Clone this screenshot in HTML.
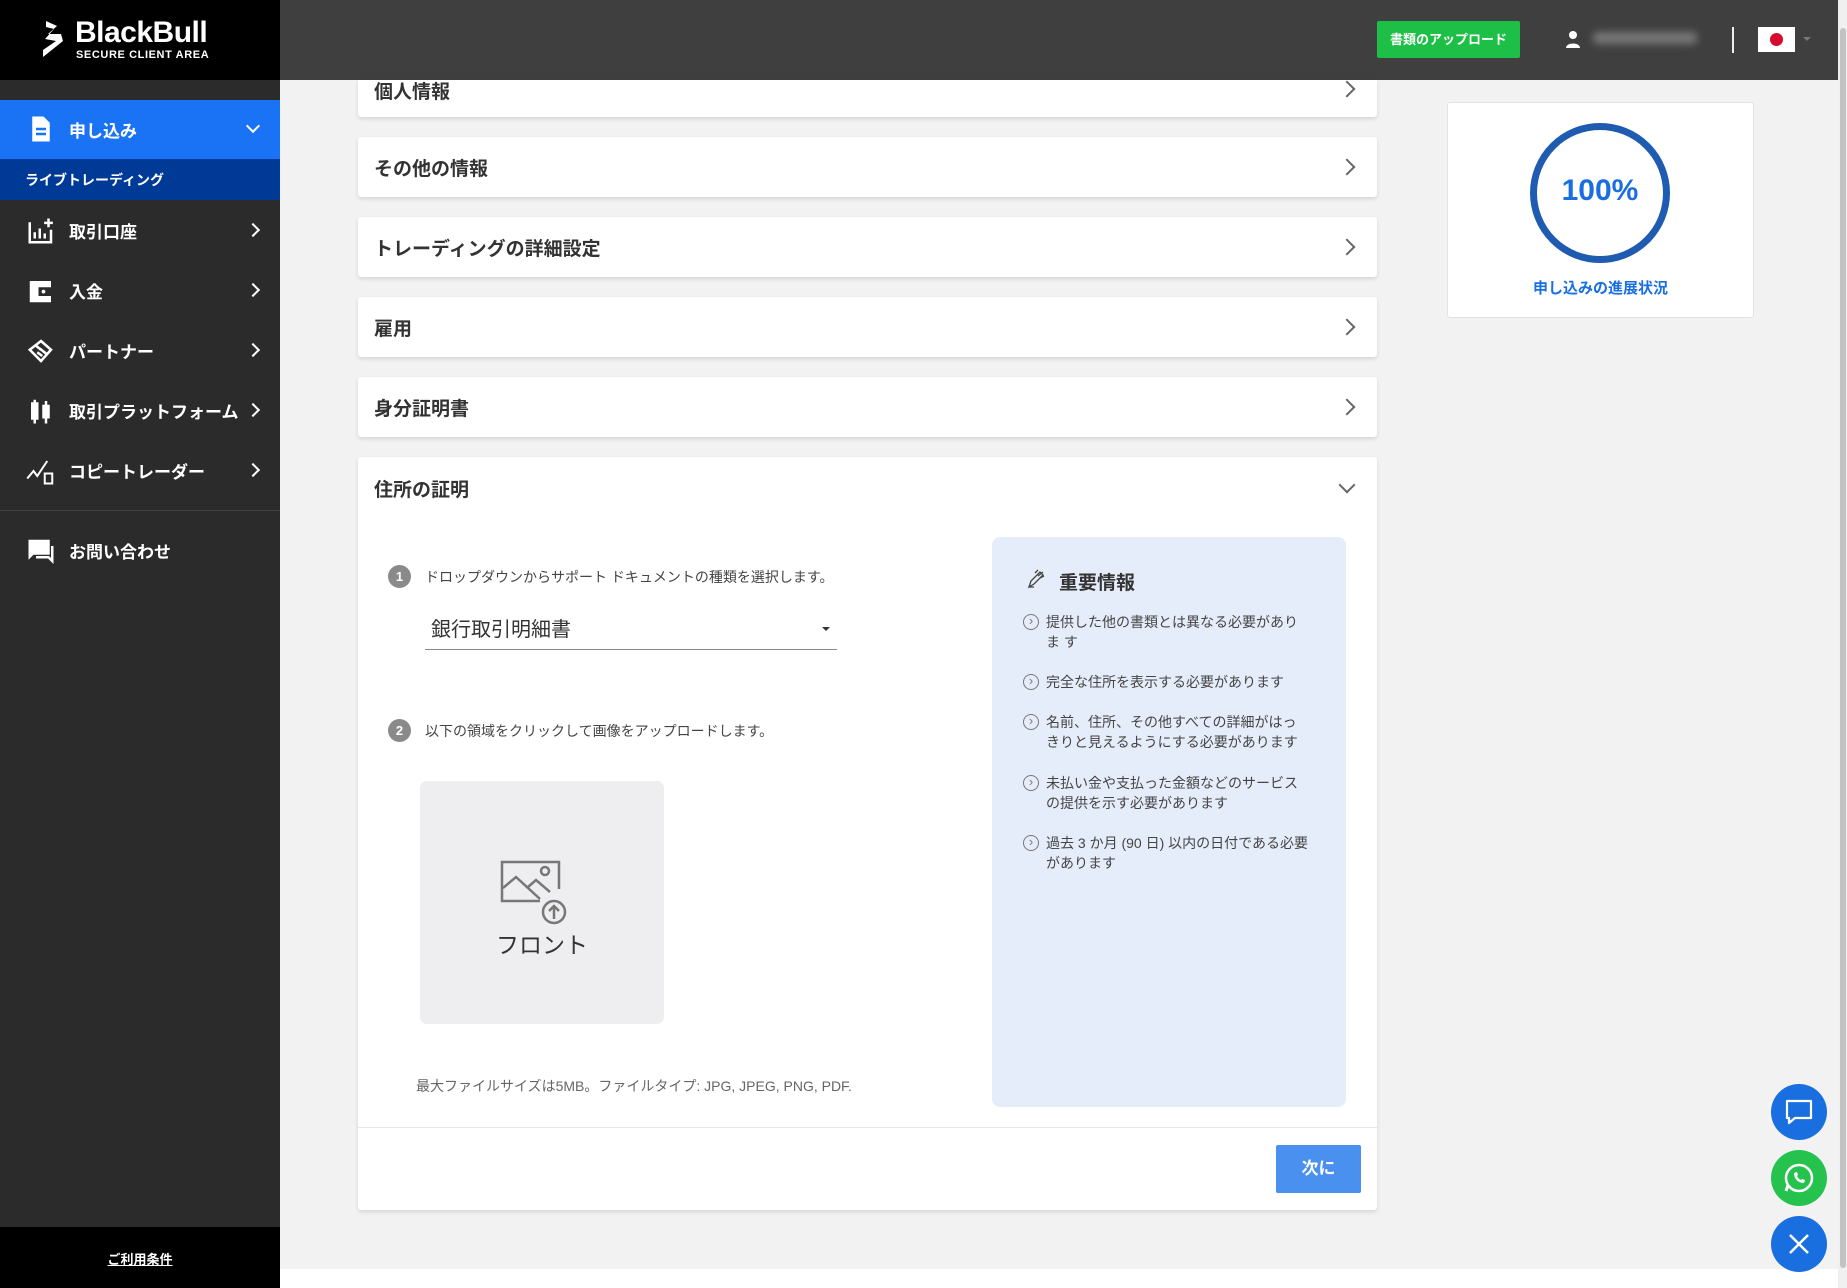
<!DOCTYPE html>
<html><head><meta charset="utf-8"><style>
*{margin:0;padding:0;box-sizing:border-box}
body{width:1847px;height:1288px;overflow:hidden;background:#f2f2f2;font-family:"Liberation Sans","Noto Sans CJK JP",sans-serif;position:relative}
.a{position:absolute}
.side{left:0;top:0;width:280px;height:1288px;background:#2b2b2b}
.mi{position:absolute;left:0;width:280px;height:60px;color:#fff;font-weight:bold;font-size:17px;display:flex;align-items:center}
.mi .ic{position:absolute;left:26px;top:16px;width:30px;height:30px}
.mi .t{position:absolute;left:69px}
.mi .ch{position:absolute;right:22px;top:25px;width:10px;height:10px;border-right:2px solid #fff;border-top:2px solid #fff;transform:rotate(45deg)}
.card{position:absolute;left:358px;width:1019px;background:#fff;border-radius:3px;box-shadow:0 2px 4px rgba(0,0,0,.12)}
.card .t{position:absolute;left:16px;font-size:19px;font-weight:bold;color:#333}
.card .ch{position:absolute;right:24px;width:12px;height:12px;border-right:2px solid #666;border-top:2px solid #666;transform:rotate(45deg)}
.li{position:absolute;left:1046px;width:264px;font-size:14px;color:#444;line-height:20px}
.li:before{content:"›";position:absolute;left:-23px;top:2px;width:14px;height:14px;border:1.5px solid #777;border-radius:50%;font-size:13px;line-height:11px;text-align:center;color:#777}
.fab{position:absolute;left:1771px;width:56px;height:56px;border-radius:50%}
</style></head><body>
<div class="a" style="left:280px;top:0;width:1567px;height:80px;background:#3f3f3f"></div>
<div class="a" style="left:1838px;top:0;width:9px;height:1288px;background:#f0f0f0"></div>
<div class="a" style="left:1840px;top:28px;width:6px;height:1240px;background:#c2c2c2;border-radius:3px"></div>
<div class="a" style="left:280px;top:1269px;width:1558px;height:19px;background:#fff"></div>

<div class="a side"></div>
<div class="a" style="left:0;top:0;width:280px;height:80px;background:#000"></div>
<svg class="a" style="left:41px;top:19px" width="24" height="40" viewBox="0 0 24 40"><path d="M5 2 L16 7 L7 15 L20 15 L22 22 L2 38 L2 31 L15 22 L4 20 L13 10 L5 8Z" fill="#fff"/></svg>
<div class="a" style="left:75px;top:16px;color:#fff;font-size:30px;font-weight:bold;letter-spacing:-0.5px">BlackBull</div>
<div class="a" style="left:76px;top:49px;color:#fff;font-size:11px;font-weight:bold;letter-spacing:0.6px">SECURE CLIENT AREA</div>

<div class="mi" style="top:100px;height:59px;background:#1a73f5"><svg class="ic" viewBox="0 0 24 24" style="top:14px"><path d="M5 2h9l5 5v15H5z" fill="#fff"/><path d="M8 12h8M8 16h8" stroke="#1a73f5" stroke-width="2"/></svg><span class="t">申し込み</span><span class="ch" style="transform:rotate(135deg);top:21px"></span></div>
<div class="a" style="left:0;top:159px;width:280px;height:41px;background:#003a97;color:#fff;font-weight:bold;font-size:14px;padding:11px 0 0 25px">ライブトレーディング</div>
<div class="mi" style="top:200px"><svg class="ic" viewBox="0 0 24 24"><path d="M3 5v16h17V11M7 18v-5M11 18v-8M15 18v-4M18 2v7M14.5 5.5h7" stroke="#fff" stroke-width="2" fill="none"/></svg><span class="t">取引口座</span><span class="ch"></span></div>
<div class="mi" style="top:260px"><svg class="ic" viewBox="0 0 24 24"><path d="M3 4h17v17H3z" fill="#fff"/><path d="M10 9h10v7H10z" fill="#2b2b2b"/><circle cx="14" cy="12.5" r="1.5" fill="#fff"/></svg><span class="t">入金</span><span class="ch"></span></div>
<div class="mi" style="top:320px"><svg class="ic" viewBox="0 0 24 24"><path d="M12 4L20 11 12 20 3 11Z M7 7L12 11M9 13l4 3M11 10l5 4" stroke="#fff" stroke-width="2" fill="none"/></svg><span class="t">パートナー</span><span class="ch"></span></div>
<div class="mi" style="top:380px"><svg class="ic" viewBox="0 0 24 24"><path d="M5 6h4v12H5zM14 8h4v9h-4zM7 3v19M16 4v18" stroke="#fff" stroke-width="2" fill="#fff"/></svg><span class="t">取引プラットフォーム</span><span class="ch"></span></div>
<div class="mi" style="top:440px"><svg class="ic" viewBox="0 0 24 24"><path d="M1 18l5-6 3 4 4-6 4-6M15 14h6v8h-6z" stroke="#fff" stroke-width="1.6" fill="none"/></svg><span class="t">コピートレーダー</span><span class="ch"></span></div>
<div class="a" style="left:0;top:510px;width:280px;height:1px;background:#444"></div>
<div class="mi" style="top:520px"><svg class="ic" viewBox="0 0 24 24"><path d="M2 3h17v12H6l-4 4z" fill="#fff"/><path d="M21 8v12l-3-3H8" stroke="#fff" stroke-width="2" fill="none"/></svg><span class="t">お問い合わせ</span></div>
<div class="a" style="left:0;top:1227px;width:280px;height:61px;background:#000;color:#fff;font-size:13px;font-weight:bold;text-align:center;padding-top:22px"><u>ご利用条件</u></div>

<div class="a" style="left:1377px;top:21px;width:143px;height:37px;background:#1dbf47;border-radius:2px;color:#fff;font-size:13px;font-weight:bold;text-align:center;line-height:37px">書類のアップロード</div>
<svg class="a" style="left:1564px;top:30px" width="18" height="18" viewBox="0 0 18 18"><circle cx="9" cy="5" r="4" fill="#fff"/><path d="M2 18c0-6 14-6 14 0z" fill="#fff"/></svg>
<div class="a" style="left:1593px;top:32px;width:104px;height:12px;background:#777;filter:blur(4px);border-radius:4px"></div>
<div class="a" style="left:1732px;top:27px;width:2px;height:26px;background:#eee"></div>
<div class="a" style="left:1758px;top:27px;width:37px;height:25px;background:#fff"><div class="a" style="left:12px;top:6px;width:13px;height:13px;border-radius:50%;background:#d60a2e"></div></div>
<div class="a" style="left:1803px;top:37px;border:4px solid transparent;border-top-color:#777"></div>

<div class="card" style="top:80px;height:37px;border-radius:0 0 3px 3px"><span class="t" style="top:-3px">個人情報</span><span class="ch" style="top:3px"></span></div>
<div class="card" style="top:137px;height:60px"><span class="t" style="top:17px">その他の情報</span><span class="ch" style="top:24px"></span></div>
<div class="card" style="top:217px;height:60px"><span class="t" style="top:17px">トレーディングの詳細設定</span><span class="ch" style="top:24px"></span></div>
<div class="card" style="top:297px;height:60px"><span class="t" style="top:17px">雇用</span><span class="ch" style="top:24px"></span></div>
<div class="card" style="top:377px;height:60px"><span class="t" style="top:17px">身分証明書</span><span class="ch" style="top:24px"></span></div>
<div class="card" style="top:457px;height:753px"><span class="t" style="top:18px">住所の証明</span><span class="ch" style="top:22px;transform:rotate(135deg)"></span>
<div class="a" style="left:0;top:670px;width:1019px;height:1px;background:#e6e6e6"></div></div>

<div class="a" style="left:388px;top:565px;width:23px;height:23px;border-radius:50%;background:#8a8a8a;color:#fff;font-size:13px;font-weight:bold;text-align:center;line-height:23px">1</div>
<div class="a" style="left:425px;top:567px;font-size:14px;color:#444">ドロップダウンからサポート ドキュメントの種類を選択します。</div>
<div class="a" style="left:431px;top:613px;font-size:20px;color:#333">銀行取引明細書</div>
<div class="a" style="left:822px;top:627px;border:4px solid transparent;border-top-color:#333"></div>
<div class="a" style="left:425px;top:649px;width:412px;height:1px;background:#888"></div>
<div class="a" style="left:388px;top:719px;width:23px;height:23px;border-radius:50%;background:#8a8a8a;color:#fff;font-size:13px;font-weight:bold;text-align:center;line-height:23px">2</div>
<div class="a" style="left:425px;top:721px;font-size:14px;color:#444">以下の領域をクリックして画像をアップロードします。</div>
<div class="a" style="left:420px;top:781px;width:244px;height:243px;background:#eeeef0;border-radius:7px"></div>
<svg class="a" style="left:500px;top:860px" width="68" height="68" viewBox="0 0 68 68"><path d="M2 28V2h57v27M2 28v13h38" stroke="#777" stroke-width="2.5" fill="none"/><path d="M3 28l13-11 24 22M28 27l8-7 14 12" stroke="#777" stroke-width="2.5" fill="none"/><circle cx="45" cy="11" r="4" stroke="#777" stroke-width="2.5" fill="none"/><circle cx="54" cy="52" r="11" stroke="#777" stroke-width="2.5" fill="#eeeef0"/><path d="M54 59V46M49 51l5-5 5 5" stroke="#777" stroke-width="2.5" fill="none"/></svg>
<div class="a" style="left:420px;top:926px;width:244px;text-align:center;font-size:23px;color:#333">フロント</div>
<div class="a" style="left:416px;top:1076px;font-size:14px;color:#666">最大ファイルサイズは5MB。ファイルタイプ: JPG, JPEG, PNG, PDF.</div>

<div class="a" style="left:992px;top:537px;width:354px;height:570px;background:#e6edfa;border-radius:8px"></div>
<svg class="a" style="left:1027px;top:569px" width="20" height="20" viewBox="0 0 20 20"><path d="M2 18l2-6 9-9 3 3-9 9zM2 18h5M8 4l3-3M13 9l4-2M11 7l5-4" stroke="#444" stroke-width="1.3" fill="none"/></svg>
<div class="a" style="left:1059px;top:568px;font-size:19px;font-weight:bold;color:#333">重要情報</div>
<div class="li" style="top:612px">提供した他の書類とは異なる必要がありま す</div>
<div class="li" style="top:672px">完全な住所を表示する必要があります</div>
<div class="li" style="top:712px">名前、住所、その他すべての詳細がはっきりと見えるようにする必要があります</div>
<div class="li" style="top:773px">未払い金や支払った金額などのサービスの提供を示す必要があります</div>
<div class="li" style="top:833px">過去 3 か月 (90 日) 以内の日付である必要があります</div>

<div class="a" style="left:1276px;top:1145px;width:85px;height:48px;background:#4a90ee;border-radius:2px;color:#fff;font-size:17px;font-weight:bold;text-align:center;line-height:48px">次に</div>

<div class="a" style="left:1447px;top:102px;width:307px;height:216px;background:#fff;border:1px solid #e3e3e3;border-radius:3px"></div>
<div class="a" style="left:1530px;top:123px;width:140px;height:140px;border-radius:50%;border:7px solid #1f5bb0"></div>
<div class="a" style="left:1530px;top:174px;width:140px;text-align:center;font-size:30px;font-weight:bold;color:#1a6fe0">100%</div>
<div class="a" style="left:1447px;top:277px;width:307px;text-align:center;font-size:15px;font-weight:bold;color:#1a6fe0">申し込みの進展状況</div>

<div class="fab" style="top:1084px;background:#1a6fe0"><svg width="56" height="56" viewBox="0 0 56 56"><path d="M16 17h24v17H24l-6 5v-5h-2z" stroke="#fff" stroke-width="2.2" fill="none" stroke-linejoin="round"/></svg></div>
<div class="fab" style="top:1150px;background:#25c24e"><svg width="56" height="56" viewBox="0 0 56 56"><circle cx="28" cy="28" r="13" stroke="#fff" stroke-width="2.5" fill="none"/><path d="M15 41l2-6" stroke="#fff" stroke-width="3"/><path d="M23 23c0 6 4 10 10 10l1-3-3-1-1 1c-2-1-3-2-4-4l1-1-1-3z" fill="#fff"/></svg></div>
<div class="fab" style="top:1216px;background:#1a6fe0"><svg width="56" height="56" viewBox="0 0 56 56"><path d="M19 19l18 18M37 19L19 37" stroke="#fff" stroke-width="2.5"/></svg></div>
</body></html>
